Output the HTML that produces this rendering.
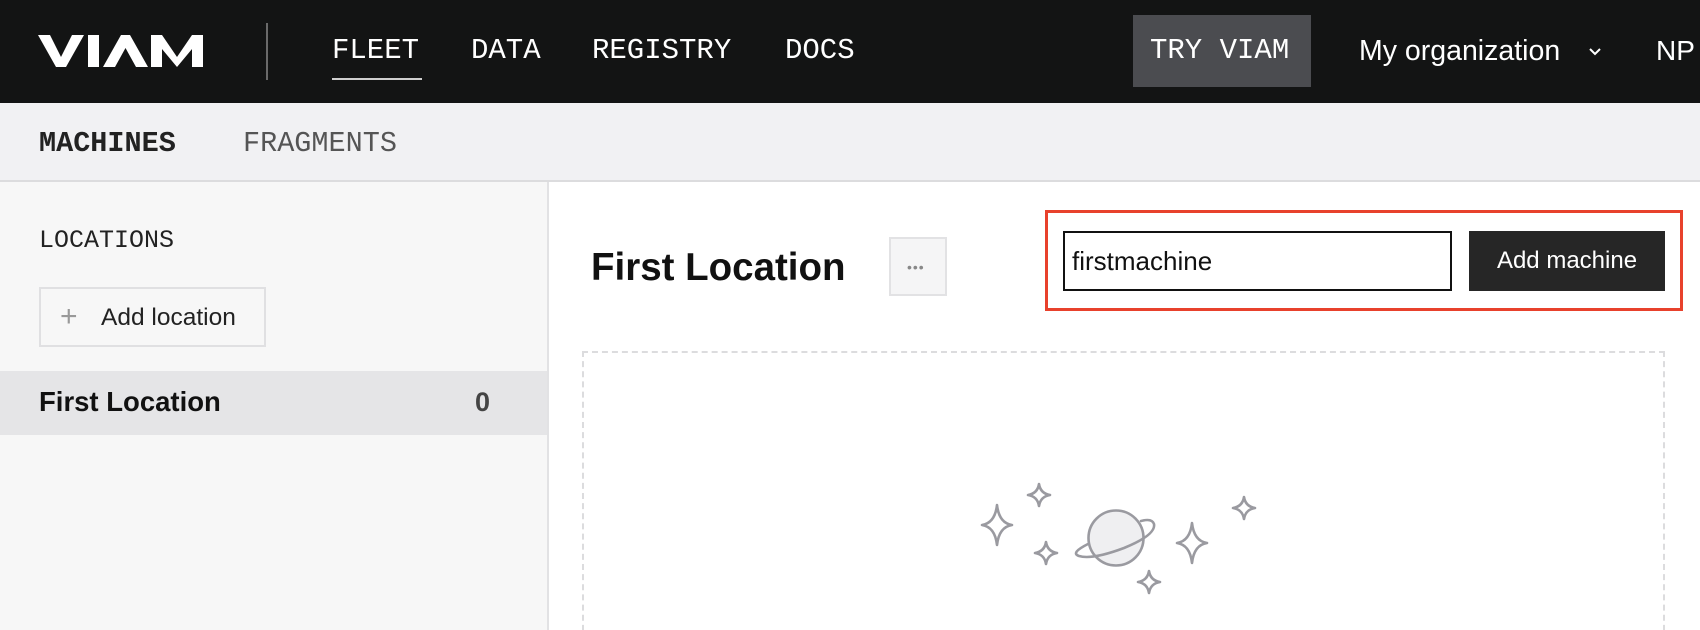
<!DOCTYPE html>
<html style="overflow:hidden;width:1700px;height:630px"><head><meta charset="utf-8"><style>
*{margin:0;padding:0;box-sizing:border-box}
body{width:1700px;height:630px;overflow:hidden;background:#fff;font-family:"Liberation Sans",sans-serif;position:relative}
.abs{position:absolute}
.mono{font-family:"Liberation Mono",monospace}
.hdr{left:0;top:0;width:1700px;height:103px;background:#131414}
.nav{color:#fff;font-size:29px;top:34px;line-height:34px}
.sub{left:0;top:103px;width:1700px;height:79px;background:#f1f1f3;border-bottom:2px solid #dcdcde}
.side{left:0;top:182px;width:549px;height:448px;background:#f7f7f7;border-right:2px solid #e2e2e4}
</style></head><body>
<div class="abs hdr"></div>
<svg class="abs" style="left:38px;top:35px" width="166" height="33" viewBox="0 0 166 33">
<polygon points="0,0 12,0 23,22 34,0 46,0 28,32 18,32" fill="#fff"/>
<rect x="50" y="0" width="11" height="32" fill="#fff"/>
<polygon points="65,32 83,0 92,0 110,32 98,32 87.5,13 77,32" fill="#fff"/>
<polygon points="113,32 113,0 124,0 139,22 154,0 165,0 165,32 154,32 154,14 139,32 124,14 124,32" fill="#fff"/>
</svg>
<div class="abs" style="left:266px;top:23px;width:2px;height:57px;background:#6a6a6a"></div>
<div class="abs mono nav" style="left:332px">FLEET</div>
<div class="abs" style="left:332px;top:78px;width:90px;height:2px;background:#cfcfcf"></div>
<div class="abs mono nav" style="left:471px">DATA</div>
<div class="abs mono nav" style="left:592px">REGISTRY</div>
<div class="abs mono nav" style="left:785px">DOCS</div>
<div class="abs" style="left:1133px;top:15px;width:178px;height:72px;background:#4b4c50"></div>
<div class="abs mono nav" style="left:1150px">TRY VIAM</div>
<div class="abs" style="left:1359px;top:34px;color:#fff;font-size:28.5px;line-height:34px">My organization</div>
<svg class="abs" style="left:1588px;top:47px" width="14" height="10"><path d="M2 2 L7 7 L12 2" stroke="#fff" stroke-width="2" fill="none"/></svg>
<div class="abs" style="left:1656px;top:34px;color:#fff;font-size:28px;line-height:34px">NP</div>

<div class="abs sub"></div>
<div class="abs mono" style="left:39px;top:128px;font-size:28.5px;font-weight:bold;color:#222;line-height:32px">MACHINES</div>
<div class="abs mono" style="left:243px;top:128px;font-size:28.5px;color:#555;line-height:32px">FRAGMENTS</div>

<div class="abs side"></div>
<div class="abs mono" style="left:39px;top:226px;font-size:25px;color:#222;line-height:30px">LOCATIONS</div>
<div class="abs" style="left:39px;top:287px;width:227px;height:60px;border:2px solid #e0e0e2;background:#f7f7f7"></div>
<div class="abs" style="left:60px;top:302px;font-size:30px;color:#999;line-height:30px;font-weight:300">+</div>
<div class="abs" style="left:101px;top:303px;font-size:24.5px;color:#222;line-height:30px">Add location</div>
<div class="abs" style="left:0;top:371px;width:547px;height:64px;background:#e5e5e7"></div>
<div class="abs" style="left:39px;top:386px;font-size:27.5px;font-weight:bold;color:#111;line-height:32px">First Location</div>
<div class="abs" style="left:475px;top:386px;font-size:27px;font-weight:bold;color:#444;line-height:32px">0</div>

<div class="abs" style="left:591px;top:246px;font-size:38.5px;font-weight:bold;color:#111;line-height:44px">First Location</div>
<div class="abs" style="left:889px;top:237px;width:58px;height:59px;border:2px solid #e2e2e4;background:#f5f5f6"></div>
<div class="abs" style="left:907px;top:262px;color:#888;font-size:14px;letter-spacing:1px;line-height:10px">&#8226;&#8226;&#8226;</div>

<div class="abs" style="left:1045px;top:210px;width:638px;height:101px;border:3px solid #e8412c"></div>
<div class="abs" style="left:1063px;top:231px;width:389px;height:60px;border:2px solid #111;background:#fff"></div>
<div class="abs" style="left:1072px;top:245px;font-size:26px;color:#111;line-height:32px">firstmachine</div>
<div class="abs" style="left:1469px;top:231px;width:196px;height:60px;background:#262626"></div>
<div class="abs" style="left:1469px;top:245px;width:196px;text-align:center;font-size:24px;color:#fff;line-height:32px">Add machine</div>

<div class="abs" style="left:582px;top:351px;width:1083px;height:290px;border:2px dashed #dcdcde"></div>

<svg class="abs" style="left:0;top:0" width="1700" height="630">
<g stroke="#9a9aa0" stroke-width="2.6" fill="none" stroke-linejoin="round" stroke-linecap="round">
<path d="M997 505 Q999 523 1012 525 Q999 527 997 545 Q995 527 982 525 Q995 523 997 505Z"/>
<path d="M1039 484 Q1040.5 493.5 1050 495 Q1040.5 496.5 1039 506 Q1037.5 496.5 1028 495 Q1037.5 493.5 1039 484Z"/>
<path d="M1046 542 Q1047.5 551.5 1057 553 Q1047.5 554.5 1046 564 Q1044.5 554.5 1035 553 Q1044.5 551.5 1046 542Z"/>
<path d="M1149 571 Q1150.5 580.5 1160 582 Q1150.5 583.5 1149 593 Q1147.5 583.5 1138 582 Q1147.5 580.5 1149 571Z"/>
<path d="M1192 523 Q1194 541 1207 543 Q1194 545 1192 563 Q1190 545 1177 543 Q1190 541 1192 523Z"/>
<path d="M1244 497 Q1245.5 506.5 1255 508 Q1245.5 509.5 1244 519 Q1242.5 509.5 1233 508 Q1242.5 506.5 1244 497Z"/>
<circle cx="1116" cy="538" r="27.5" fill="#efeff1"/>
<path d="M1088 544 Q1070 553 1079 556 Q1092 560 1124 548 Q1156 535 1154 524 Q1152 518 1141 521" />
</g>
</svg>
</body></html>
